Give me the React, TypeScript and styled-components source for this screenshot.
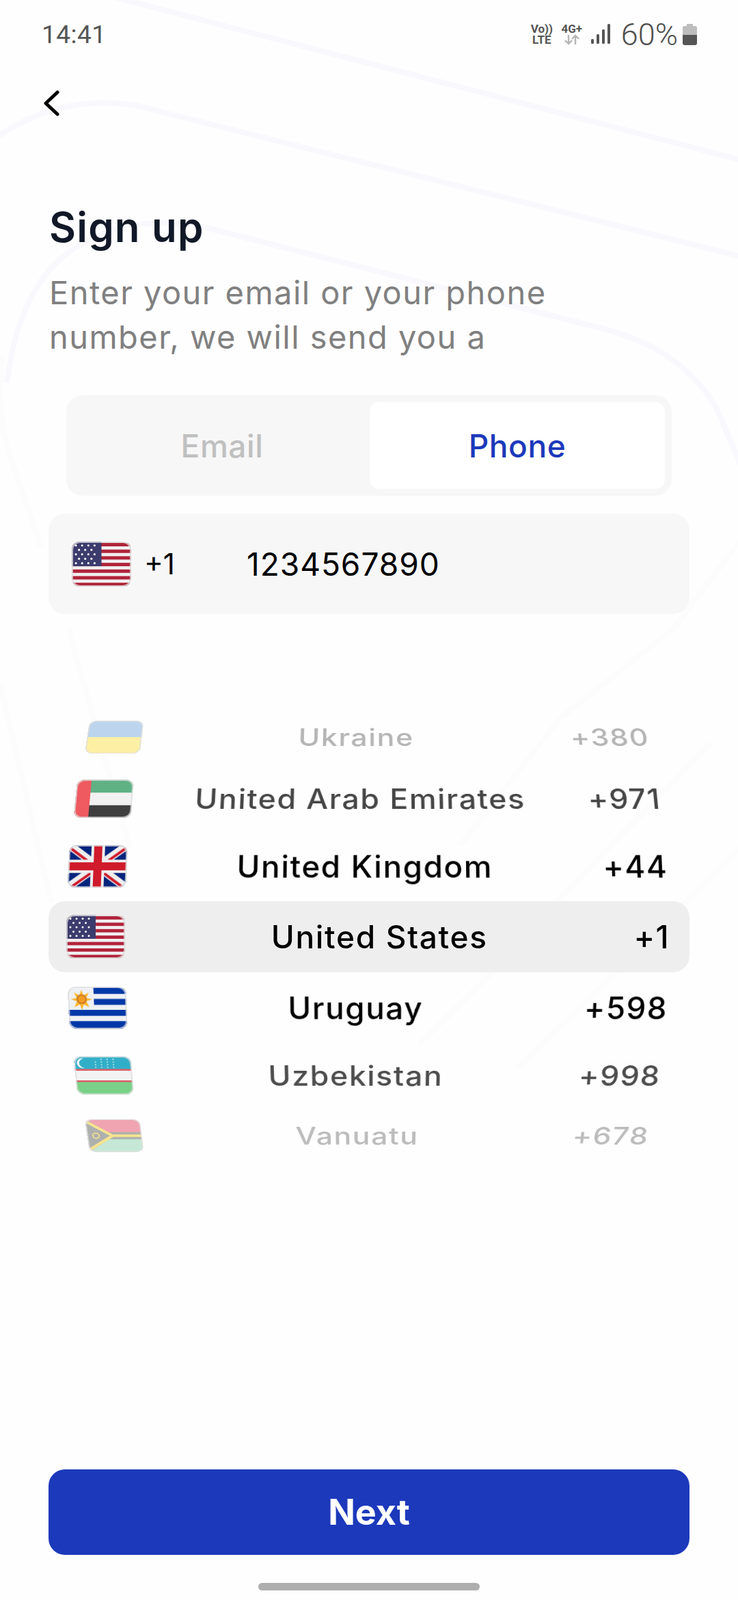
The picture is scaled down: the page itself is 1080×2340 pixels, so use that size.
import React from "react";
import styled, { createGlobalStyle } from "styled-components";

const Global = createGlobalStyle`
  html, body { margin: 0; padding: 0; background: #fff; }
  * { box-sizing: border-box; }
`;

const Page = styled.div`
  position: relative;
  width: 1080px;
  height: 2340px;
  overflow: hidden;
  background: #fefefe;
  display: flex;
  flex-direction: column;
  font-family: Inter, "Noto Sans", sans-serif;
`;

const Backdrop = styled.svg`
  position: absolute;
  inset: 0;
  width: 1080px;
  height: 2340px;
  pointer-events: none;
`;

const Content = styled.div`
  position: relative;
  flex: 1;
  display: flex;
  flex-direction: column;
`;

const StatusBar = styled.div`
  height: 100px;
  padding: 0 60px 0 61px;
  display: flex;
  align-items: center;
  justify-content: space-between;
  font-family: Roboto, sans-serif;
  color: #555;
`;

const Time = styled.span`
  font-size: 37px;
  letter-spacing: 0.5px;
`;

const StatusRight = styled.div`
  display: flex;
  align-items: center;
`;

const Stack = styled.div`
  display: flex;
  flex-direction: column;
  align-items: center;
  font-size: 17px;
  line-height: 16px;
  font-weight: 700;
  color: #555;
  width: 32px;
`;

const Network = styled(Stack)`
  margin-left: 12px;
`;

const Signal = styled.svg`
  margin-left: 12px;
  display: block;
`;

const Percent = styled.span`
  margin-left: 16px;
  font-size: 45px;
  font-weight: 300;
  color: #4f4f4f;
`;

const Battery = styled.svg`
  margin-left: 7px;
  display: block;
`;

const BackRow = styled.div`
  height: 68px;
  margin-top: 17px;
  padding: 0 0 0 62px;
  display: flex;
  align-items: center;
`;

const Title = styled.h1`
  margin: 115px 0 0 72px;
  font-size: 60px;
  line-height: 64px;
  font-weight: 600;
  color: #111827;
  letter-spacing: 1.2px;
`;

const Subtitle = styled.p`
  margin: 31px 0 0 72px;
  width: 800px;
  font-size: 47px;
  line-height: 65px;
  font-weight: 400;
  color: #808080;
  letter-spacing: 1.45px;
`;

const Tabs = styled.div`
  margin: 53px 97px 0 97px;
  height: 147px;
  padding: 10px 10px 10px 0;
  display: flex;
  background: #f7f7f7;
  border-radius: 24px;
`;

const Tab = styled.div<{ $active?: boolean }>`
  flex: ${(p) => (p.$active ? "0 0 432px" : "1")};
  padding-left: ${(p) => (p.$active ? 0 : 12)}px;
  display: flex;
  align-items: center;
  justify-content: center;
  font-size: 46px;
  font-weight: 500;
  letter-spacing: 0.6px;
  border-radius: 14px;
  color: ${(p) => (p.$active ? "#1c39bb" : "#c0c0c0")};
  background: ${(p) => (p.$active ? "#ffffff" : "transparent")};
`;

const PhoneField = styled.div`
  margin: 26px 71px 0;
  height: 147px;
  padding-left: 34px;
  display: flex;
  align-items: center;
  background: #f7f7f7;
  border-radius: 24px;
  font-size: 46px;
  letter-spacing: 1px;
  color: #000;
`;

const Dial = styled.span`
  margin-left: 19px;
  width: 150px;
  font-size: 42px;
  letter-spacing: 0;
`;

const Wheel = styled.div`
  margin: 136px 71px 0;
  display: flex;
  flex-direction: column;
`;

const Row = styled.div<{ $h: number; $selected?: boolean }>`
  height: ${(p) => p.$h}px;
  padding: 0 29px 0 26px;
  display: flex;
  align-items: center;
  font-size: 46px;
  font-weight: 500;
  border-radius: 24px;
  background: ${(p) => (p.$selected ? "#eeeeee" : "transparent")};
`;

const RowInner = styled.div<{ $tilt: number; $sx: number; $ink: string }>`
  flex: 1;
  display: flex;
  align-items: center;
  justify-content: space-between;
  color: ${(p) => p.$ink};
  transform: perspective(2400px) rotateX(${(p) => p.$tilt}deg) scaleX(${(p) => p.$sx});
`;

const CountryName = styled.span`
  letter-spacing: 1.7px;
`;

const Code = styled.span`
  letter-spacing: 1.4px;
`;

const FlagFrame = styled.svg`
  display: block;
  flex: none;
  border-radius: 12px;
  outline: 2px solid rgba(222, 222, 222, 0.8);
  outline-offset: -2px;
`;

const Spacer = styled.div`
  flex: 1;
`;

const NextButton = styled.button`
  margin: 0 71px;
  height: 125px;
  border: 0;
  border-radius: 24px;
  background: #1c39bb;
  color: #fff;
  font-family: inherit;
  font-size: 52px;
  font-weight: 700;
`;

const HomeBarWrap = styled.div`
  height: 66px;
  padding-top: 41px;
  display: flex;
  justify-content: center;
`;

const HomeBar = styled.div`
  width: 324px;
  height: 11px;
  border-radius: 6px;
  background: #aeaeae;
`;

const Chevron = () => (
  <svg width="26" height="38" viewBox="0 0 26 38" fill="none">
    <path d="M22 3 L5 19 L22 35" stroke="#000" strokeWidth="5" strokeLinecap="round" strokeLinejoin="round" />
  </svg>
);

const FlagUS = ({ w = 86, h = 64 }: { w?: number; h?: number }) => {
  const stars: React.ReactElement[] = [];
  for (let r = 0; r < 5; r++) {
    const n = r % 2 === 0 ? 4 : 3;
    for (let c = 0; c < n; c++) {
      stars.push(<circle key={`${r}-${c}`} cx={(r % 2 === 0 ? 6 : 10.5) + c * 9} cy={5.5 + r * 6.3} r="1.5" fill="#fff" />);
    }
  }
  return (
    <FlagFrame width={w} height={h} viewBox="0 0 86 64" preserveAspectRatio="none">
      <rect width="86" height="64" fill="#f1eef0" />
      {[0, 1, 2, 3, 4, 5, 6].map((i) => (
        <rect key={i} y={2 + i * 9.4} width="86" height="4.8" fill="#b0233a" />
      ))}
      <rect width="43" height="35" fill="#3c3b6e" />
      {stars}
    </FlagFrame>
  );
};

const FlagUK = () => (
  <FlagFrame width="86" height="64" viewBox="0 0 86 64">
    <rect width="86" height="64" fill="#00247d" />
    <path d="M0 0 L86 64 M86 0 L0 64" stroke="#eeeeee" strokeWidth="12" />
    <path d="M0 0 L43 32 M86 64 L43 32" stroke="#cf1b2b" strokeWidth="4" transform="translate(-1.5 2)" />
    <path d="M86 0 L43 32 M0 64 L43 32" stroke="#cf1b2b" strokeWidth="4" transform="translate(1.5 2)" />
    <path d="M43 0 V64 M0 32 H86" stroke="#eeeeee" strokeWidth="20" />
    <path d="M43 0 V64 M0 32 H86" stroke="#cf1b2b" strokeWidth="12" />
  </FlagFrame>
);

const FlagUA = () => (
  <FlagFrame width="86" height="64" viewBox="0 0 86 64">
    <rect width="86" height="32" fill="#bcd4ee" />
    <rect y="32" width="86" height="32" fill="#fdf0a5" />
  </FlagFrame>
);

const FlagAE = () => (
  <FlagFrame width="86" height="64" viewBox="0 0 86 64">
    <rect width="86" height="22" fill="#5fb184" />
    <rect y="22" width="86" height="21" fill="#f1f1f1" />
    <rect y="43" width="86" height="21" fill="#3f3f3f" />
    <rect width="22" height="64" fill="#ee5a60" />
  </FlagFrame>
);

const FlagUY = () => (
  <FlagFrame width="86" height="64" viewBox="0 0 86 64">
    <rect width="86" height="64" fill="#eef0f4" />
    {[0, 1, 2].map((i) => (
      <rect key={i} x={i < 2 ? 38 : 0} y={2 + i * 16.5} width="86" height="9" fill="#0038a8" />
    ))}
    <rect y="52" width="86" height="12" fill="#0038a8" />
    <path d="M20 5 L23 13 L31 9 L27 17 L36 19 L27 22 L31 31 L23 27 L20 35 L17 27 L9 31 L13 22 L4 19 L13 17 L9 9 L17 13 Z" fill="#fcb731" />
    <circle cx="20" cy="19" r="6.5" fill="#f79a21" stroke="#b9702a" strokeWidth="1.6" />
  </FlagFrame>
);

const FlagUZ = () => (
  <FlagFrame width="86" height="64" viewBox="0 0 86 64">
    <rect width="86" height="64" fill="#f3f3f3" />
    <rect width="86" height="21" fill="#32afc8" />
    <rect y="21" width="86" height="3" fill="#d9636b" />
    <rect y="40" width="86" height="3" fill="#d9636b" />
    <rect y="43" width="86" height="21" fill="#78d187" />
    <path d="M15 4 A8 8 0 1 0 15 19 A7 7 0 1 1 15 4 Z" fill="#fff" />
    {[0, 1, 2, 3].map((r) =>
      [0, 1, 2, 3].map((c) => (
        <circle key={`${r}${c}`} cx={32 + c * 9} cy={5 + r * 4.4} r="0.9" fill="#fff" opacity={r === 0 && c === 0 ? 0 : 1} />
      ))
    )}
  </FlagFrame>
);

const FlagVU = () => (
  <FlagFrame width="86" height="64" viewBox="0 0 86 64">
    <rect width="86" height="30" fill="#f0a4b2" />
    <rect y="30" width="86" height="34" fill="#c5e8d6" />
    <rect y="25" width="86" height="14" fill="#aeb0ae" />
    <path d="M0 0 L43 32 L0 64 Z" fill="#aeb0ae" />
    <path d="M0 4 L40 32 L0 60 M40 32 H86" fill="none" stroke="#f7e48e" strokeWidth="5" />
    <circle cx="14" cy="32" r="5" fill="none" stroke="#f7e48e" strokeWidth="2" />
  </FlagFrame>
);

const rows = [
  { name: "Ukraine", code: "+380", flag: <FlagUA />, h: 87, tilt: 41, sx: 0.931, ink: "#b5b5b5" },
  { name: "United Arab Emirates", code: "+971", flag: <FlagAE />, h: 94, tilt: 29, sx: 0.97, ink: "#464646" },
  { name: "United Kingdom", code: "+44", flag: <FlagUK />, h: 103, tilt: 14, sx: 0.993, ink: "#000" },
  { name: "United States", code: "+1", flag: <FlagUS />, h: 104, tilt: 0, sx: 1, ink: "#000", selected: true },
  { name: "Uruguay", code: "+598", flag: <FlagUY />, h: 104, tilt: -14, sx: 0.993, ink: "#000" },
  { name: "Uzbekistan", code: "+998", flag: <FlagUZ />, h: 94, tilt: -29, sx: 0.97, ink: "#4d4d4d" },
  { name: "Vanuatu", code: "+678", flag: <FlagVU />, h: 82, tilt: -41, sx: 0.931, ink: "#bcbcbc" },
];

export default function App() {
  return (
    <Page>
      <Global />
      <Backdrop viewBox="0 0 1080 2340" fill="none">
        <g stroke="#f8f8fd" strokeWidth="8">
          <path d="M168 -4 L1084 234" />
          <path d="M-4 200 Q70 150 158 150 Q200 152 241 165 L1084 375" />
          <path d="M10 560 Q30 400 127 353 Q200 315 290 330 L880 480 Q1000 510 1050 600 L1084 680" />
        </g>
        <g stroke="#fcfcfc" strokeWidth="8">
          <path d="M1084 790 L985 920 L820 1050 L673 1237" />
          <path d="M1040 1087 L816 1317 L720 1423 L613 1527" />
          <path d="M1084 1240 L900 1423 L757 1563" />
          <path d="M100 920 L190 1240" />
          <path d="M0 1000 L75 1320" />
          <path d="M4 520 Q-6 600 12 660 L60 800" />
        </g>
      </Backdrop>
      <Content>
        <StatusBar>
          <Time>14:41</Time>
          <StatusRight>
            <Stack>
              <span>Vo))</span>
              <span>LTE</span>
            </Stack>
            <Network>
              <span>4G+</span>
              <svg width="24" height="16" viewBox="0 0 24 16" fill="none" stroke="#b5b5b5" strokeWidth="2.4">
                <path d="M7 1 V14 M2 9 L7 14 L12 9" />
                <path d="M17 15 V2 M12 7 L17 2 L22 7" />
              </svg>
            </Network>
            <Signal width="28" height="30" viewBox="0 0 28 30" fill="#555">
              <rect x="0" y="22" width="4" height="7" rx="1.5" />
              <rect x="8" y="15" width="4" height="14" rx="1.5" />
              <rect x="16" y="8" width="4" height="21" rx="1.5" />
              <rect x="24" y="0" width="4" height="29" rx="1.5" />
            </Signal>
            <Percent>60%</Percent>
            <Battery width="21" height="31" viewBox="0 0 21 31">
              <path d="M6 0 H15 V3 H18 Q21 3 21 6 V16 H0 V6 Q0 3 3 3 H6 Z" fill="#bdbdbd" />
              <path d="M0 16 H21 V28 Q21 31 18 31 H3 Q0 31 0 28 Z" fill="#555" />
            </Battery>
          </StatusRight>
        </StatusBar>
        <BackRow>
          <Chevron />
        </BackRow>
        <Title>Sign up</Title>
        <Subtitle>Enter your email or your phone number, we will send you a</Subtitle>
        <Tabs>
          <Tab>Email</Tab>
          <Tab $active>Phone</Tab>
        </Tabs>
        <PhoneField>
          <FlagUS w={87} h={66} />
          <Dial>+1</Dial>
          <span>1234567890</span>
        </PhoneField>
        <Wheel>
          {rows.map((r) => (
            <Row key={r.name} $h={r.h} $selected={r.selected}>
              <RowInner $tilt={r.tilt} $sx={r.sx} $ink={r.ink}>
                {r.flag}
                <CountryName>{r.name}</CountryName>
                <Code>{r.code}</Code>
              </RowInner>
            </Row>
          ))}
        </Wheel>
        <Spacer />
        <NextButton>Next</NextButton>
        <HomeBarWrap>
          <HomeBar />
        </HomeBarWrap>
      </Content>
    </Page>
  );
}
